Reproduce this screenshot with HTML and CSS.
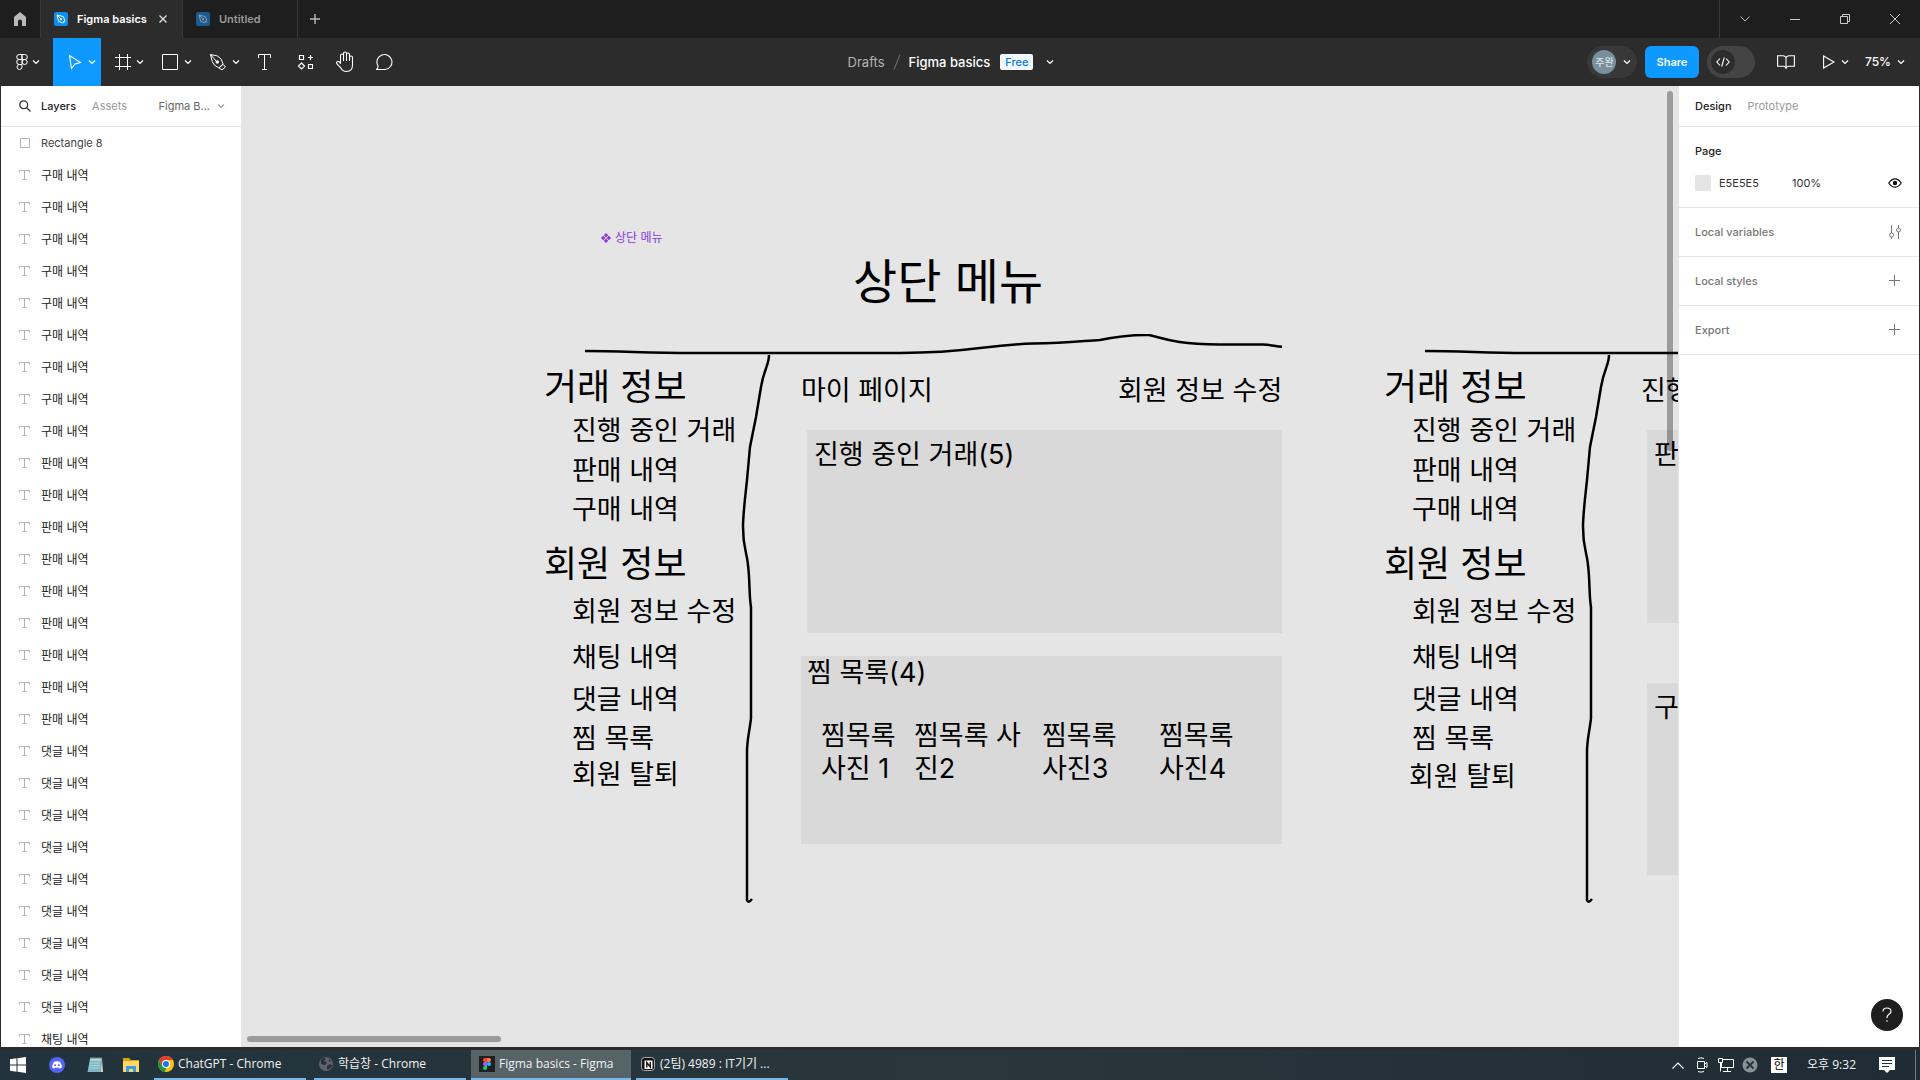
FILE: index.html
```html
<!DOCTYPE html>
<html lang="ko">
<head>
<meta charset="utf-8">
<meta name="viewport" content="width=device-width, initial-scale=1">
<title>Figma basics</title>
<link rel="stylesheet" href="styles.css">
</head>
<body>
<svg class="defs" aria-hidden="true">
  <symbol id="chev" viewBox="0 0 8 8"><path d="M1 2.5 4 5.5 7 2.5" fill="none" stroke="currentColor" stroke-width="1.2"/></symbol>
  <symbol id="plus" viewBox="0 0 12 12"><path d="M5.500 0v11M0 5.500h11" fill="none" stroke="currentColor"/></symbol>
  <symbol id="nib" viewBox="0 0 14 14"><rect width="14" height="14" rx="2" fill="#0d8ff0"/><path d="M3 3l6.3 1.6 1.4 3.6-2.5 2.5-3.6-1.4zM3 3l4 4M9 11.3l2.3-2.3" fill="none" stroke="#fff"/><circle cx="7.2" cy="7.2" r="1" fill="#fff"/></symbol>
  <symbol id="text-layer" viewBox="0 0 12 12"><path d="M.5 3.500V1.500h10V3.500M5.500 1.500v9M3.500 10.500h4" fill="none" stroke="#b3b3b3"/></symbol>
  <symbol id="rule" viewBox="0 0 720 570"><path d="M3 17C40 17 66 19 110 19H318C390 19 400 11 451 9.500 485 9 500 7 518 6 548 0 560 1 567 1 582 4 590 10 637 10.500H681C690 11 694 12.500 700 12.700"/><path d="M187 21C187 31 182 35 179 53L174 83 168 113 165 146C163 165 161 180 161 193 161 215 165 218 166 231 168 247 167 262 169 273V384C168 395 165 405 165 418V566Q166 570 170 565"/></symbol>
</svg>
<div class="app">
  <header class="titlebar">
    <button class="home" aria-label="Home"><svg width="12" height="14" viewBox="0 0 12 14"><path d="M0 5 6 0l6 5v9H8V9.500a2 2 0 0 0-4 0V14H0z" fill="#b9b9b9"/></svg></button>
    <div class="tab active"><svg class="i14"><use href="#nib"/></svg><span>Figma basics</span><button aria-label="Close tab"><svg width="8" height="8" viewBox="0 0 8 8"><path d="M.5.5l7 7m0-7-7 7" stroke="#ddd" stroke-width="1.400"/></svg></button></div>
    <div class="tab"><svg class="i14"><use href="#nib"/></svg><span>Untitled</span></div>
    <button class="new-tab" aria-label="New tab"><svg width="10" height="10" viewBox="0 0 10 10"><path d="M5 0v10M0 5h10" stroke="#bbb" stroke-width="1.400"/></svg></button>
    <div class="window-buttons">
      <button aria-label="Tabs"><svg width="10" height="6" viewBox="0 0 10 6"><path d="M.5.5 5 5 9.500.5" fill="none" stroke="#bbb"/></svg></button>
      <button aria-label="Minimize"><svg width="10" height="10" viewBox="0 0 10 10"><path d="M0 5.500h10" stroke="#ccc"/></svg></button>
      <button aria-label="Restore"><svg width="10" height="10" viewBox="0 0 10 10"><path d="M.5 2.500h7v7h-7zM2.500 2.500v-2h7v7h-2" fill="none" stroke="#ccc"/></svg></button>
      <button aria-label="Close"><svg width="10" height="10" viewBox="0 0 10 10"><path d="M0 0l10 10M10 0 0 10" stroke="#ccc"/></svg></button>
    </div>
  </header>

  <div class="toolbar">
    <nav class="tools" aria-label="Tools">
      <button class="tool menu" aria-label="Main menu"><svg width="12" height="16" viewBox="0 0 12 16" fill="none" stroke="#fff"><path d="M6 .5H3.200a2.500 2.500 0 0 0 0 5H6zM6 .5h2.800a2.500 2.500 0 0 1 0 5H6zM6 5.500H3.200a2.500 2.500 0 0 0 0 5H6zM6 10.500H3.200A2.500 2.500 0 1 0 6 13z"/><circle cx="8.700" cy="8" r="2.500"/></svg><svg class="i8"><use href="#chev"/></svg></button>
      <button class="tool selected" aria-label="Move"><svg width="24" height="24" viewBox="0 0 24 24"><path d="M6.500 5.500 17.500 12.500 12 14 8.500 18.500z" fill="none" stroke="#fff" stroke-width="1.100"/></svg><svg class="i8"><use href="#chev"/></svg></button>
      <button class="tool" aria-label="Frame"><svg width="24" height="24" viewBox="0 0 24 24"><path d="M8.500 4v16M16.500 4v16M4 7.500h16M4 16.500h16" stroke="#fff"/></svg><svg class="i8"><use href="#chev"/></svg></button>
      <button class="tool" aria-label="Rectangle"><svg width="24" height="24" viewBox="0 0 24 24"><path d="M3.500 4.500h15v15h-15z" fill="none" stroke="#fff"/></svg><svg class="i8"><use href="#chev"/></svg></button>
      <button class="tool" aria-label="Pen"><svg width="24" height="24" viewBox="0 0 24 24" fill="none" stroke="#fff"><path d="M3.500 4.500 10.500 6Q15 8 16 14L11.800 17.800Q6.500 16 5.200 11.500zM3.500 4.500l6 7M12 18l4.200-3.700 2.300 2.700-3.500 2.800z"/><circle cx="10.300" cy="12" r="1.300" fill="#fff"/></svg><svg class="i8"><use href="#chev"/></svg></button>
      <button class="tool single" aria-label="Text"><svg width="14" height="16" viewBox="0 0 14 16"><path d="M.5 4V.5h12V4M6.500.5v15M4 15.500h5" fill="none" stroke="#fff"/></svg></button>
      <button class="tool single" aria-label="Resources"><svg width="16" height="16" viewBox="0 0 16 16" fill="none" stroke="#fff" stroke-width="1.200"><path d="M2.500 1.500h4v4h-4zM11.500 10.500h4v4h-4zM13.500 1v5M11 3.500h5M4.500 9l3 3-3 3-3-3z"/></svg></button>
      <button class="tool single" aria-label="Hand"><svg width="20" height="22" viewBox="0 0 20 22"><path d="M5.500 12V4.500a1.500 1.500 0 0 1 3 0V10 2.500a1.500 1.500 0 0 1 3 0V10 3.500a1.500 1.500 0 0 1 3 0V10 6.500a1.500 1.500 0 0 1 3 0V14q0 6.500-6 6.500-4 0-5.500-3.500L2 13q-1-2 .5-2.500T5 11.800l.5 1.200" fill="none" stroke="#fff" stroke-width="1.100"/></svg></button>
      <button class="tool single" aria-label="Comment"><svg width="18" height="18" viewBox="0 0 18 18"><path d="M.5 16.500q2-1.500 1.300-4A7.500 7.500 0 1 1 9 16.500z" fill="none" stroke="#fff" stroke-width="1.100"/></svg></button>
    </nav>
    <div class="doc"><a href="#drafts">Drafts</a><svg width="8" height="16" viewBox="0 0 8 16"><path d="M7 .5 1 15.500" stroke="#777"/></svg><h1>Figma basics</h1><span class="badge">Free</span><button aria-label="File options"><svg class="i8"><use href="#chev"/></svg></button></div>
    <div class="actions">
      <button class="user"><span class="avatar">주완</span><svg class="i8"><use href="#chev"/></svg></button>
      <button class="share">Share</button>
      <button class="devmode" aria-label="Dev mode"><span class="knob"><svg width="14" height="10" viewBox="0 0 14 10"><path d="M4 1.500.8 5 4 8.500M10 1.500 13.200 5 10 8.500M8.300.5 5.700 9.500" fill="none" stroke="#fff" stroke-width="1.100"/></svg></span></button>
      <button class="library" aria-label="Library"><svg width="18" height="14" viewBox="0 0 18 14"><path d="M9 2.500v9.500M9 2.500Q8 .7 6 .7H.6v10.600H6.500Q8.500 11.500 9 13.300 9.500 11.500 11.500 11.300h5.900V.7H12Q10 .7 9 2.500" fill="none" stroke="#fff" stroke-width="1.100"/></svg></button>
      <button class="play" aria-label="Present"><svg width="12" height="14" viewBox="0 0 12 14"><path d="M.6 1v12L11 7z" fill="none" stroke="#fff" stroke-width="1.100"/></svg><svg class="i8"><use href="#chev"/></svg></button>
      <button class="zoom">75%<svg class="i8"><use href="#chev"/></svg></button>
    </div>
  </div>

  <main class="workspace">
    <aside class="layers">
      <div class="panel-head"><svg width="12" height="12" viewBox="0 0 12 12"><circle cx="4.700" cy="4.700" r="3.900" fill="none" stroke="#333" stroke-width="1.300"/><path d="M7.500 7.500 11.500 11.500" stroke="#333" stroke-width="1.300"/></svg><button class="on">Layers</button><button>Assets</button><button class="pages">Figma B...<svg class="i8"><use href="#chev"/></svg></button></div>
      <ul>
        <li class="latin"><svg class="i12" viewBox="0 0 12 12"><path d="M1.500 1.500h9v9h-9z" fill="none" stroke="#b3b3b3"/></svg>Rectangle 8</li>
        <li><svg class="i12"><use href="#text-layer"/></svg>구매 내역</li>
        <li><svg class="i12"><use href="#text-layer"/></svg>구매 내역</li>
        <li><svg class="i12"><use href="#text-layer"/></svg>구매 내역</li>
        <li><svg class="i12"><use href="#text-layer"/></svg>구매 내역</li>
        <li><svg class="i12"><use href="#text-layer"/></svg>구매 내역</li>
        <li><svg class="i12"><use href="#text-layer"/></svg>구매 내역</li>
        <li><svg class="i12"><use href="#text-layer"/></svg>구매 내역</li>
        <li><svg class="i12"><use href="#text-layer"/></svg>구매 내역</li>
        <li><svg class="i12"><use href="#text-layer"/></svg>구매 내역</li>
        <li><svg class="i12"><use href="#text-layer"/></svg>판매 내역</li>
        <li><svg class="i12"><use href="#text-layer"/></svg>판매 내역</li>
        <li><svg class="i12"><use href="#text-layer"/></svg>판매 내역</li>
        <li><svg class="i12"><use href="#text-layer"/></svg>판매 내역</li>
        <li><svg class="i12"><use href="#text-layer"/></svg>판매 내역</li>
        <li><svg class="i12"><use href="#text-layer"/></svg>판매 내역</li>
        <li><svg class="i12"><use href="#text-layer"/></svg>판매 내역</li>
        <li><svg class="i12"><use href="#text-layer"/></svg>판매 내역</li>
        <li><svg class="i12"><use href="#text-layer"/></svg>판매 내역</li>
        <li><svg class="i12"><use href="#text-layer"/></svg>댓글 내역</li>
        <li><svg class="i12"><use href="#text-layer"/></svg>댓글 내역</li>
        <li><svg class="i12"><use href="#text-layer"/></svg>댓글 내역</li>
        <li><svg class="i12"><use href="#text-layer"/></svg>댓글 내역</li>
        <li><svg class="i12"><use href="#text-layer"/></svg>댓글 내역</li>
        <li><svg class="i12"><use href="#text-layer"/></svg>댓글 내역</li>
        <li><svg class="i12"><use href="#text-layer"/></svg>댓글 내역</li>
        <li><svg class="i12"><use href="#text-layer"/></svg>댓글 내역</li>
        <li><svg class="i12"><use href="#text-layer"/></svg>댓글 내역</li>
        <li><svg class="i12"><use href="#text-layer"/></svg>채팅 내역</li>
      </ul>
    </aside>

    <section class="canvas" aria-label="Canvas">
      <div class="frame">
        <p class="node component"><svg width="10" height="10" viewBox="0 0 10 10"><path d="M5 0l2.200 2.200L5 4.400 2.800 2.200zM5 5.600l2.200 2.200L5 10 2.800 7.800zM2.200 2.800 4.400 5 2.200 7.200 0 5zM7.800 2.800 10 5 7.800 7.200 5.600 5z" fill="#8638e5"/></svg>상단 메뉴</p>
        <p class="node banner">상단 메뉴</p>
        <div class="node card deals"></div>
        <div class="node card wishes"></div>
        <svg class="node pencil"><use href="#rule"/></svg>
        <h2 class="node deal-head">거래 정보</h2>
        <p class="node n-progress">진행 중인 거래</p>
        <p class="node n-sales">판매 내역</p>
        <p class="node n-buys">구매 내역</p>
        <h2 class="node member-head">회원 정보</h2>
        <p class="node n-edit">회원 정보 수정</p>
        <p class="node n-chat">채팅 내역</p>
        <p class="node n-reply">댓글 내역</p>
        <p class="node n-wish">찜 목록</p>
        <p class="node n-leave">회원 탈퇴</p>
        <p class="node page-name">마이 페이지</p>
        <p class="node page-edit">회원 정보 수정</p>
        <p class="node deals-title">진행 중인 거래(5)</p>
        <p class="node wishes-title">찜 목록(4)</p>
        <p class="node w1">찜목록<br>사진 1</p>
        <p class="node w2">찜목록 사<br>진2</p>
        <p class="node w3">찜목록<br>사진3</p>
        <p class="node w4">찜목록<br>사진4</p>
      </div>
      <div class="frame second">
        <div class="node card sales"></div>
        <div class="node card buys"></div>
        <svg class="node pencil"><use href="#rule"/></svg>
        <h2 class="node deal-head">거래 정보</h2>
        <p class="node n-progress">진행 중인 거래</p>
        <p class="node n-sales">판매 내역</p>
        <p class="node n-buys">구매 내역</p>
        <h2 class="node member-head">회원 정보</h2>
        <p class="node n-edit">회원 정보 수정</p>
        <p class="node n-chat">채팅 내역</p>
        <p class="node n-reply">댓글 내역</p>
        <p class="node n-wish">찜 목록</p>
        <p class="node n-leave">회원 탈퇴</p>
        <p class="node page-name">진행</p>
        <p class="node deals-title">판</p>
        <p class="node buys-title">구</p>
      </div>
      <div class="scroll-y"></div>
      <div class="scroll-x"></div>
    </section>

    <aside class="design">
      <div class="panel-head"><button class="on">Design</button><button>Prototype</button></div>
      <section class="page">
        <h2>Page</h2>
        <div class="fill"><span class="swatch"></span><span class="hex">E5E5E5</span><span class="opacity">100%</span><button aria-label="Toggle visibility"><svg width="14" height="10" viewBox="0 0 14 10"><path d="M.8 5Q3.500.8 7 .8T13.200 5Q10.500 9.200 7 9.200T.8 5z" fill="none" stroke="#111" stroke-width="1.200"/><circle cx="7" cy="5" r="2.200" fill="#111"/></svg></button></div>
      </section>
      <section class="prop"><h2>Local variables</h2><button aria-label="Open variables"><svg width="12" height="14" viewBox="0 0 12 14" fill="none" stroke="#777"><path d="M2.500 0v8M2.500 12v2M9.500 0v3M9.500 7v7"/><circle cx="2.500" cy="10" r="2"/><circle cx="9.500" cy="5" r="2"/></svg></button></section>
      <section class="prop"><h2>Local styles</h2><button aria-label="Add style"><svg class="i12"><use href="#plus"/></svg></button></section>
      <section class="prop"><h2>Export</h2><button aria-label="Add export"><svg class="i12"><use href="#plus"/></svg></button></section>
      <button class="help" aria-label="Help"><svg width="10" height="16" viewBox="0 0 10 16"><path d="M1 4.500Q1 1 5 1t4 3.200Q9 6 7 7.200T5 10.500V11" fill="none" stroke="#fff" stroke-width="1.200"/><circle cx="5" cy="14" r=".8" fill="#fff"/></svg></button>
    </aside>
  </main>

  <footer class="taskbar">
    <button class="pin start" aria-label="Start"><svg width="16" height="16" viewBox="0 0 16 16"><path d="M0 2.200 6.500 1.300v6.200H0zM7.500 1.200 16 0v7.500H7.500zM0 8.500h6.500v6.200L0 13.800zM7.500 8.500H16V16l-8.500-1.200z" fill="#fff"/></svg></button>
    <button class="pin" aria-label="Discord"><svg width="16" height="16" viewBox="0 0 16 16"><circle cx="8" cy="8" r="8" fill="#5865f2"/><path d="M5 4.800q3-.9 6 0 2 2.800 1.800 5.800-1.300 1-2.300 1l-.7-1q-1.800.5-3.600 0l-.7 1q-1 0-2.300-1Q3 7.600 5 4.800z" fill="#fff"/><circle cx="6.200" cy="8.300" r="1" fill="#5865f2"/><circle cx="9.800" cy="8.300" r="1" fill="#5865f2"/></svg></button>
    <button class="pin notepad" aria-label="Notepad"><svg width="16" height="16" viewBox="0 0 16 16"><path d="M3 1.500h12L13.500 15H.5z" fill="#7fb9c9"/><path d="M15 1.500l1 13.500h-2.500z" fill="#d9d3c0"/><path d="M3.500 1.500h11l-.3 2h-11z" fill="#c8e4ea"/><path d="M4 0v2.500M6 0v2.500M8 0v2.500M10 0v2.500M12 0v2.500M14 0v2.500" stroke="#999" stroke-width=".8"/><path d="M3 6h10M2.800 8.500h10M2.500 11h10" stroke="#a9d5df"/></svg></button>
    <button class="pin explorer" aria-label="Explorer"><svg width="16" height="14" viewBox="0 0 16 14"><path d="M0 0h6l2 2h8v12H0z" fill="#dc9d12"/><path d="M0 3h16v11H0z" fill="#ffd869"/><path d="M3 8h10v6h-3v-3H6v3H3z" fill="#3b9ae0"/></svg></button>
    <button class="task"><svg width="16" height="16" viewBox="0 0 16 16"><circle cx="8" cy="8" r="8" fill="#fbc116"/><path d="M1.100 4a8 8 0 0 1 13.800 0H8L4.500 10z" fill="#e33b2e"/><path d="M1.100 4 4.700 10.200 8 12l-1 3.950A8 8 0 0 1 1.100 4z" fill="#229342"/><circle cx="8" cy="8" r="4" fill="#fff"/><circle cx="8" cy="8" r="3" fill="#1a73e8"/></svg>ChatGPT - Chrome</button>
    <button class="task"><svg width="16" height="16" viewBox="0 0 16 16"><circle cx="8" cy="8" r="7" fill="#5f6368"/><path d="M3 4q3-3 5-2L6 5l3 2-2 2-4-1zM9 10l3-2 2 1q-1 4-5 4.500zM11 3l2 2-2 1z" fill="#22323b"/></svg>학습창 - Chrome</button>
    <button class="task current"><svg width="16" height="16" viewBox="0 0 16 16"><rect width="16" height="16" fill="#202020"/><path d="M6 2h2v4H6a2 2 0 0 1 0-4z" fill="#f24e1e"/><path d="M8 2h2a2 2 0 0 1 0 4H8z" fill="#ff7262"/><path d="M8 6H6a2 2 0 0 0 0 4h2z" fill="#a259ff"/><circle cx="10" cy="8" r="2" fill="#1abcfe"/><path d="M8 10H6a2 2 0 1 0 2 2z" fill="#0acf83"/></svg>Figma basics - Figma</button>
    <button class="task"><svg width="16" height="16" viewBox="0 0 16 16"><rect x="1.500" y="1.500" width="13" height="13" rx="3" fill="#111" stroke="#aaa"/><path d="M4.500 4.500h8v8.500h-8z" fill="#fff"/><path d="M6.800 11.500V6.500l3.500 4.500V6" fill="none" stroke="#111" stroke-width="1.400"/></svg>(2팀) 4989 : IT기기 ...</button>
    <div class="tray">
      <button class="more" aria-label="Hidden icons"><svg width="12" height="7" viewBox="0 0 12 7"><path d="M.5 6.500 6 1l5.500 5.500" fill="none" stroke="#fff" stroke-width="1.200"/></svg></button>
      <button class="camera" aria-label="Camera"><svg width="12" height="16" viewBox="0 0 12 16"><path d="M1.500 4.500h7v7h-7zM8.500 7l2.500-1.500v5L8.500 9M2 1.500Q5 .2 8 1.500M2 14.500q3 1.300 6 0" fill="none" stroke="#fff"/></svg></button>
      <button aria-label="Network"><svg width="16" height="14" viewBox="0 0 16 14"><path d="M5 1.500h10.500v8H3.500V5M9.500 9.500v4M5 13.500h8M.5.500h4v4h-4zM2.500 4.500v9" fill="none" stroke="#fff"/></svg></button>
      <button aria-label="Status"><svg width="16" height="16" viewBox="0 0 16 16"><circle cx="8" cy="8" r="7.500" fill="#8b9296"/><path d="M4.500 4.500l7 7m0-7-7 7" stroke="#22323b" stroke-width="1.800"/></svg></button>
      <button class="ime">한</button>
      <time>오후 9:32</time>
      <button class="note" aria-label="Notifications"><svg width="16" height="16" viewBox="0 0 16 16"><path d="M0 0h16v13h-5l-3 3-3-3H0z" fill="#fff"/><path d="M3 3.500h10M3 6.500h10M3 9.500h7" stroke="#22323b"/></svg></button>
    </div>
  </footer>
</div>
</body>
</html>
```
FILE: styles.css
```css
* { box-sizing: border-box; margin: 0; padding: 0; }
body { font: 11px/16px Inter, "Noto Sans CJK KR", sans-serif; color: #333; }
button { font: inherit; color: inherit; background: none; border: 0; display: flex; align-items: center; justify-content: center; white-space: nowrap; }
svg { display: block; flex: none; }
.defs { position: absolute; width: 0; height: 0; }
.i8 { width: 8px; height: 8px; }
.i12 { width: 12px; height: 12px; }
.i14 { width: 14px; height: 14px; }
.app { display: flex; flex-direction: column; height: 100vh; background: #2c2c2c; overflow: hidden; }

.titlebar { display: flex; flex: none; height: 38px; background: #1e1e1e; }
.home { width: 41px; border-right: 1px solid #3a3a3a; }
.tab { display: flex; align-items: center; gap: 9px; padding: 0 13px; width: 115px; border-right: 1px solid #3a3a3a; color: #999; font-weight: 600; white-space: nowrap; }
.tab svg { opacity: .55; }
.tab.active { width: 142px; padding: 0 15px 0 13px; background: #2c2c2c; color: #fff; }
.tab.active svg { opacity: 1; }
.tab.active button { margin-left: auto; }
.new-tab { width: 34px; }
.window-buttons { display: flex; margin-left: auto; border-left: 1px solid #3a3a3a; }
.window-buttons button { width: 50px; }

.toolbar { display: grid; grid-template-columns: 1fr auto 1fr; flex: none; height: 48px; color: #fff; }
.tools, .doc, .actions { display: flex; align-items: center; }
.tool { width: 48px; height: 48px; gap: 1px; padding-left: 5px; }
.tool.menu { width: 53px; gap: 4px; padding-left: 3px; }
.tool.selected { background: #0d99ff; }
.tool.single { width: 40px; padding: 0; }
.doc { font-size: 13px; gap: 8px; padding-right: 18px; }
.doc a { color: #b3b3b3; text-decoration: none; }
.doc h1 { font-size: 13px; font-weight: 500; }
.badge { margin: 0 5px 0 2px; padding: 0 5px; border-radius: 2px; background: #f2f9ff; color: #007be5; font-size: 11px; font-weight: 500; }
.actions { justify-content: flex-end; padding-right: 15px; font-weight: 500; }
.actions button { height: 32px; }
.user { width: 50px; gap: 7px; border-radius: 16px; background: #383838; }
.avatar { width: 24px; border-radius: 12px; background: #78909c; color: #dde5e8; font-size: 10px; line-height: 24px; }
.share { width: 54px; margin: 0 8px; border-radius: 6px; background: #0d99ff; font-weight: 600; }
.devmode { width: 48px; border-radius: 16px; background: #444; }
.actions .devmode { justify-content: flex-start; padding-left: 4px; }
.knob { display: flex; align-items: center; justify-content: center; width: 24px; height: 24px; border-radius: 12px; background: #2c2c2c; }
.library { margin: 0 28px 0 22px; }
.play { gap: 6px; margin-right: 16px; }
.zoom { gap: 6px; font-size: 12px; }

.workspace { display: flex; flex: 1; min-height: 0; padding: 0 1px; }
.layers, .design { flex: none; width: 240px; background: #fff; overflow: hidden; }
.design { position: relative; }
.panel-head { display: flex; align-items: center; height: 41px; gap: 16px; padding: 0 16px; border-bottom: 1px solid #e5e5e5; color: #999; }
.panel-head .on { color: #222; font-weight: 500; }
.layers .panel-head { padding-left: 18px; }
.layers .on { margin-left: -6px; }
.pages { gap: 7px; margin-left: auto; color: #666; }
.pages svg { color: #999; }
ul { list-style: none; }
li { display: flex; align-items: center; gap: 10px; height: 32px; padding-left: 18px; font: 12px/16px "Noto Sans CJK KR", sans-serif; color: #222; white-space: nowrap; }
.latin { font: 11px/16px Inter, sans-serif; color: #444; }

.canvas { position: relative; flex: 1; background: #e5e5e5; overflow: hidden; border-right: 1px solid #e5e5e5; }
.frame { position: absolute; top: 0; left: 0; }
.second { left: 840px; }
.node { position: absolute; font: 27px/33px Inter, "Noto Sans CJK KR", sans-serif; color: #000; white-space: nowrap; }
h2.node { left: 303px; font-size: 36px; line-height: 44px; }
.component { display: flex; align-items: center; gap: 4px; left: 360px; top: 144px; font: 12px/16px Inter, "Noto Sans CJK KR", sans-serif; color: #8638e5; }
.banner { left: 612px; top: 167px; font-size: 48px; line-height: 58px; }
.pencil { left: 341px; top: 248px; width: 720px; height: 570px; fill: none; stroke: #000; stroke-width: 2.5px; }
.card { background: #d9d9d9; }
.deals { left: 566px; top: 344px; width: 475px; height: 203px; }
.wishes { left: 560px; top: 570px; width: 481px; height: 188px; }
.sales { left: 566px; top: 344px; width: 475px; height: 193px; }
.buys { left: 566px; top: 597px; width: 475px; height: 192px; }
.deal-head { top: 279px; }
.member-head { top: 456px; }
.n-progress, .n-sales, .n-buys, .n-edit, .n-chat, .n-reply, .n-wish, .n-leave { left: 331px; }
.n-progress { top: 328px; }
.n-sales { top: 368px; }
.n-buys { top: 407px; }
.n-edit { top: 509px; }
.n-chat { top: 555px; }
.n-reply { top: 597px; }
.n-wish { top: 636px; }
.n-leave { top: 672px; }
.second .n-leave { left: 328px; top: 674px; }
.page-name { left: 560px; top: 288px; }
.page-edit { left: 877px; top: 288px; }
.deals-title { left: 573px; top: 352px; }
.wishes-title { left: 566px; top: 570px; }
.buys-title { left: 573px; top: 605px; }
.w1, .w2, .w3, .w4 { top: 633px; }
.w1 { left: 580px; }
.w2 { left: 673px; }
.w3 { left: 801px; }
.w4 { left: 918px; }
.scroll-y { position: absolute; top: 5px; right: 5px; width: 6px; height: 360px; border-radius: 3px; background: rgba(0, 0, 0, .32); }
.scroll-x { position: absolute; left: 6px; bottom: 5px; width: 254px; height: 6px; border-radius: 3px; background: rgba(0, 0, 0, .32); }

.design h2 { font-size: 11px; font-weight: 500; }
.page { display: flex; flex-direction: column; gap: 16px; height: 81px; padding: 16px; border-bottom: 1px solid #e5e5e5; }
.page h2 { color: #222; }
.fill { display: flex; align-items: center; }
.swatch { width: 16px; height: 16px; margin-right: 8px; border-radius: 1px; background: #e5e5e5; }
.hex { width: 73px; }
.fill button { margin-left: auto; padding-right: 1px; }
.prop { display: flex; align-items: center; justify-content: space-between; height: 49px; padding: 0 18px 0 16px; border-bottom: 1px solid #e5e5e5; color: #777; }
.help { position: absolute; right: 16px; bottom: 16px; width: 32px; height: 32px; border-radius: 16px; background: #1e1e1e; }

.taskbar { display: flex; flex: none; height: 33px; border-top: 3px solid #2c2c2c; background: linear-gradient(90deg, #22333d, #29363b 50%, #1f2c35); color: #f2f2f2; font: 12px/16px "Open Sans", "Noto Sans CJK KR", sans-serif; }
.pin { width: 36px; }
.start { width: 39px; padding-right: 3px; }
.notepad { width: 39px; }
.explorer { width: 34px; margin-right: 6px; }
.task { width: 152px; margin-right: 8px; gap: 4px; padding-left: 4px; border-bottom: 2px solid #76b9ed; }
.taskbar .task { justify-content: flex-start; }
.task.current { width: 160px; margin: 0 5px 0 -3px; padding-left: 8px; background: #566468; }
.tray { display: flex; align-items: center; gap: 8px; margin-left: auto; margin-right: 4px; padding-right: 20px; border-right: 1px solid #707a80; }
.more { margin-right: 4px; }
.camera { margin-right: 2px; }
.ime { width: 16px; height: 16px; margin: 0 12px 0 5px; background: #fff; color: #000; }
.note { margin-left: 15px; }
```
